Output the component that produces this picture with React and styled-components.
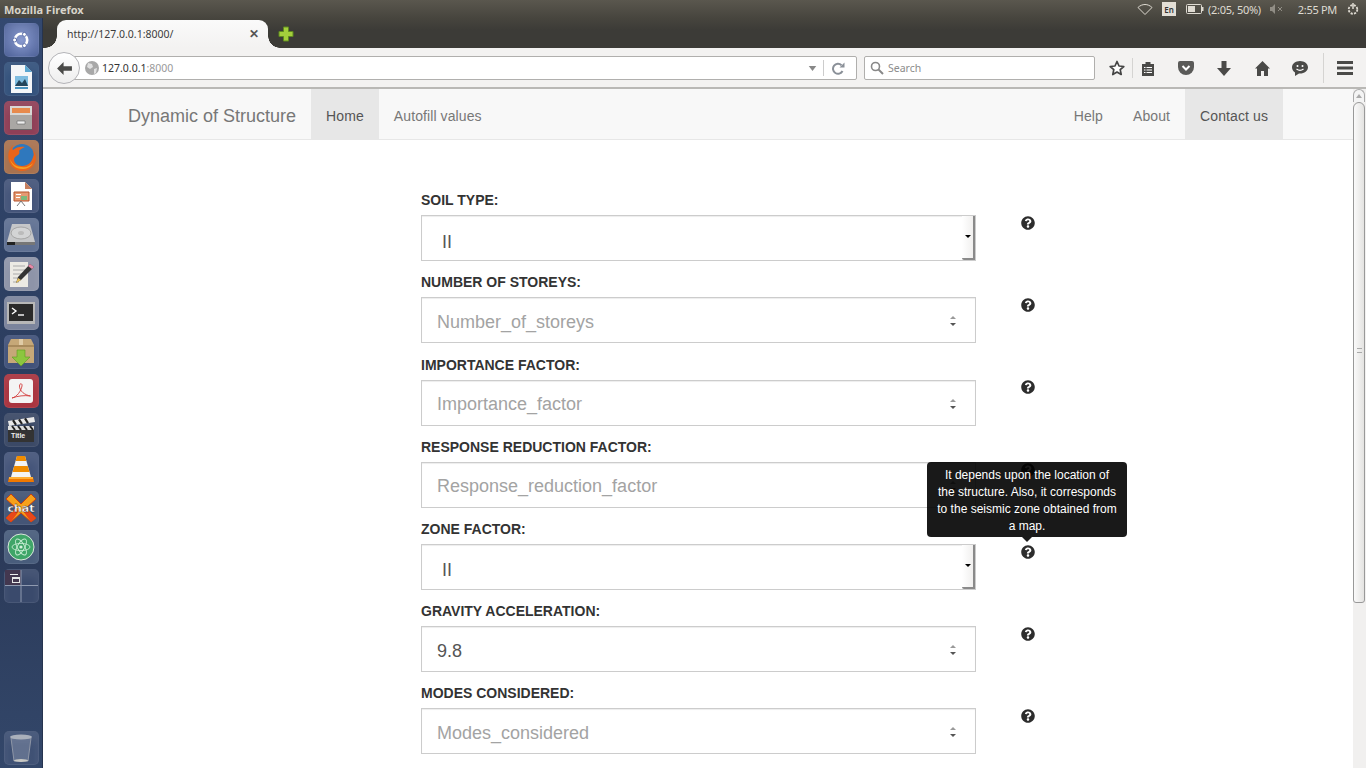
import React from "react";
import styled, { createGlobalStyle } from "styled-components";
import { FaQuestionCircle } from "react-icons/fa";

const Global = createGlobalStyle`
  html, body { margin: 0; padding: 0; overflow: hidden; background: #fff; }
  * { box-sizing: border-box; }
`;

const Screen = styled.div`
  width: 1366px; height: 768px; overflow: hidden; display: flex; flex-direction: column;
  font-family: "Liberation Sans", Arial, sans-serif;
`;
const Panel = styled.div`
  height: 18px; flex: none; display: flex; align-items: center; padding: 0 6px 0 4px;
  background: linear-gradient(#5a574e, #47453e); color: #dfdbd2;
  font: 11px "Noto Sans", sans-serif;
`;
const PanelTitle = styled.div`font-weight: 700; flex: 1; letter-spacing: 0; color: #d8d4ca;`;
const Tray = styled.div`display: flex; align-items: center; white-space: nowrap;`;
const LangBox = styled.span`
  width: 14px; height: 14px; background: #e3dfd6; color: #333; font-size: 8px; font-weight: 600;
  display: flex; align-items: center; justify-content: center; margin: 0 10px 0 9px;
`;
const BatteryText = styled.span`margin: 0 9px 0 4px; font-size: 11px; letter-spacing: -.3px;`;
const Clock = styled.span`margin: 0 9px 0 15px; font-size: 11px; letter-spacing: -.3px;`;

const Desktop = styled.div`flex: 1; display: flex; min-height: 0;`;
const Launcher = styled.div`
  width: 43px; flex: none; display: flex; flex-direction: column; align-items: center;
  padding: 5px 0 3px 0; gap: 5px;
  background: linear-gradient(#33486f, #2c3e60 45%, #2b3a59 70%, #33476a);
  border-right: 1px solid #26344f;
`;
const Tile = styled.div`
  width: 35px; height: 34px; border-radius: 5px; flex: none; display: flex; align-items: center; justify-content: center;
  background: ${p => p.$bg}; border: 1px solid rgba(255,255,255,.08); box-shadow: inset 0 8px 8px rgba(255,255,255,.07);
  ${p => p.$push && "margin-top: auto;"}
`;
const Browser = styled.div`flex: 1; min-width: 0; display: flex; flex-direction: column;`;
const TabStrip = styled.div`
  height: 30px; flex: none; display: flex; align-items: flex-end; padding-left: 14px;
  background: linear-gradient(#47453e, #3c3b37 40%);
`;
const Tab = styled.div`
  position: relative; width: 211px; height: 28px; border-radius: 9px 9px 0 0;
  background: linear-gradient(#fafafa, #f3f2f1);
  display: flex; align-items: center; justify-content: space-between; padding: 1px 9px 2px 10px;
  color: #3c3c3c; font: 10.5px "Noto Sans", sans-serif;
  &::before, &::after { content: ""; position: absolute; bottom: 0; width: 12px; height: 12px; }
  &::before { left: -12px; background: radial-gradient(circle at 0 0, transparent 11.5px, #f3f2f1 12px); }
  &::after { right: -12px; background: radial-gradient(circle at 100% 0, transparent 11.5px, #f3f2f1 12px); }
`;
const TabClose = styled.span`font-size: 12px; font-weight: 700; color: #555; line-height: 1;`;
const NewTab = styled.div`margin: 0 0 6px 10px; height: 16px; display: flex;`;

const Toolbar = styled.div`
  height: 41px; flex: none; display: flex; align-items: center; position: relative;
  padding: 1px 0 0 21px; background: #f3f2f1; border-bottom: 2px solid #b9b8b5;
`;
const BackButton = styled.div`
  position: absolute; left: 5px; top: 4px; width: 32px; height: 32px; border-radius: 50%; z-index: 1;
  background: linear-gradient(#fff, #eee); border: 1px solid #b4b4b8;
  display: flex; align-items: center; justify-content: center;
`;
const UrlBar = styled.div`
  width: 793px; height: 24px; margin-left: 0; background: #fff; border: 1px solid #b0afad; border-radius: 0 2px 2px 0;
  display: flex; align-items: center; padding-left: 20px; font: 10.5px "Noto Sans", sans-serif; color: #333;
`;
const Globe = styled.span`display: flex; margin-right: 3px;`;
const UrlPort = styled.span`color: #999;`;
const UrlEnd = styled.div`margin-left: auto; display: flex; align-items: center; height: 100%;`;
const Divider = styled.span`width: 1px; height: 16px; background: #ccc; margin: 0 8px 0 6px;`;
const ReloadBox = styled.span`display: flex; margin-right: 11px;`;
const SearchBar = styled.div`
  width: 231px; height: 24px; margin-left: 7px; background: #fff; border: 1px solid #b0afad; border-radius: 2px;
  display: flex; align-items: center; padding-left: 5px; gap: 4px; color: #8c8c8c; font: 10.5px "Noto Sans", sans-serif;
`;
const ToolIcons = styled.div`display: flex; align-items: center; margin-left: 7px; height: 100%;`;
const ToolIcon = styled.span`width: ${p => p.$w}px; display: flex; justify-content: center; flex: none;`;
const ToolSep = styled.span`
  width: 1px; height: ${p => p.$h}px; background: #d5d4d2; flex: none; margin-left: ${p => p.$ml || 0}px;
`;

const Viewport = styled.div`flex: 1; display: flex; min-height: 0; background: #fff;`;
const Page = styled.div`flex: 1; min-width: 0; overflow: hidden;`;
const Navbar = styled.nav`
  height: 51px; display: flex; padding: 0 70px 0 70px; background: #f8f8f8; border-bottom: 1px solid #e7e7e7;
`;
const Brand = styled.a`padding: 0 15px; font-size: 18px; line-height: 54px; color: #777; white-space: nowrap;`;
const NavLink = styled.a`
  padding: 0 15px; font-size: 14px; line-height: 55px; height: 50px; white-space: nowrap; letter-spacing: .1px;
  color: ${p => (p.$active ? "#555" : "#777")}; background: ${p => (p.$active ? "#e7e7e7" : "transparent")};
  ${p => p.$pushRight && "margin-left: auto;"}
`;
const Form = styled.div`padding: 50.2px 0 0 378px;`;
const Field = styled.div`
  height: 82.2px; display: grid; grid-template-columns: 555px 14px; column-gap: 45px; align-content: start;
`;
const FieldBody = styled.div`display: flex; flex-direction: column;`;
const Label = styled.label`
  font-size: 14px; font-weight: 700; line-height: 21px; color: #333; margin-bottom: 4px; white-space: nowrap;
`;
const Control = styled.div`
  position: relative; height: 46px; border: 1px solid #ccc; background: #fff; display: flex; align-items: center;
  padding: ${p => (p.$select ? "8px 0 0 20px" : "4px 0 0 15px")}; font-size: 18px;
  color: ${p => (p.$placeholder ? "#a3a3a3" : "#555")};
  box-shadow: inset 0 1px 1px rgba(0,0,0,.075);
`;
const DropButton = styled.span`
  position: absolute; top: 0; right: 0; bottom: 0; width: 13px; display: flex; align-items: center; justify-content: center;
  background: linear-gradient(90deg, #fff, #f1f0ef); border-right: 2px solid #8a8a8a; border-bottom: 2px solid #8a8a8a;
  border-radius: 0 0 0 2px; padding-bottom: 1px;
`;
const DropArrow = styled.i`
  width: 0; height: 0; border: 3px solid transparent; border-top-color: #000; border-bottom-width: 0; display: block;
`;
const Spinner = styled.span`
  position: absolute; right: 19px; top: 18px; display: flex; flex-direction: column; gap: 4px;
`;
const SpinUp = styled.i`display: block; width: 0; height: 0; border: 3.5px solid transparent; border-top-width: 0; border-bottom: 3.5px solid #999;`;
const SpinDown = styled.i`display: block; width: 0; height: 0; border: 3.5px solid transparent; border-bottom-width: 0; border-top: 3.5px solid #555;`;
const HelpWrap = styled.div`
  position: relative; height: 14px; margin-top: 25.8px; color: #2d2d2d; font-size: 14px; line-height: 14px;
  svg { display: block; }
`;
const Tooltip = styled.div`
  position: absolute; left: 50%; bottom: 22px; transform: translateX(-101px); z-index: 3; width: 200px;
  padding: 5px 8px 2px; border-radius: 4px; background: rgba(0,0,0,.9); color: #fff;
  font-size: 12px; line-height: 17px; text-align: center;
  &::after {
    content: ""; position: absolute; left: 50%; bottom: -5px; margin-left: -5px;
    border: 5px solid transparent; border-bottom-width: 0; border-top-color: rgba(0,0,0,.9);
  }
`;
const Scrollbar = styled.div`
  width: 13px; flex: none; background: #f1f0ef; display: flex; flex-direction: column; padding-right: 1px;
`;
const ScrollUp = styled.div`
  height: 13px; border: 1px solid #aaa; border-bottom: 0; border-radius: 6px 6px 0 0; background: #f4f4f4;
  display: flex; justify-content: center; padding-top: 4px;
`;
const ScrollArrow = styled.i`display: block; width: 0; height: 0; border: 3.5px solid transparent; border-top-width: 0; border-bottom: 4px solid #aaa;`;
const ScrollThumb = styled.div`
  height: 501px; border: 1px solid #999; border-radius: 6px 6px 3px 3px; padding-bottom: 4px;
  background: linear-gradient(90deg, #fafafa, #e4e3e1); display: flex; align-items: center; justify-content: center;
`;
const Grip = styled.i`display: block; width: 5px; height: 5px; border-top: 1px solid #aaa; border-bottom: 1px solid #aaa;`;

const Ubuntu = () => (
  <svg width="24" height="24" viewBox="0 0 24 24"><circle cx="12" cy="12" r="6.2" fill="none" stroke="#fff" strokeWidth="2.6" /><circle cx="5.6" cy="12" r="2" fill="#fff" stroke="#5b6ea8" /><circle cx="15.4" cy="6.4" r="2" fill="#fff" stroke="#5b6ea8" /><circle cx="15.4" cy="17.6" r="2" fill="#fff" stroke="#5b6ea8" /></svg>
);
const DrawDoc = () => (
  <svg width="26" height="30" viewBox="0 0 26 30"><path d="M3 1h14l7 7v21H3z" fill="#f4f6f8" /><path d="M17 1l7 7h-7z" fill="#5aa6d0" /><path d="M7 12h13v10H7z" fill="#7fbde0" /><path d="M7 22l4-6 3 3 3-4 3 7z" fill="#24465c" /><path d="M7 23h13v2H7z" fill="#4a94c0" /></svg>
);
const Cabinet = () => (
  <svg width="28" height="28" viewBox="0 0 28 28"><path d="M3 2h22v24H3z" fill="#a9a7a4" /><path d="M3 2h22v9H3z" fill="#d9d7d4" /><path d="M5 4h18v5H5z" fill="#e78a4c" /><path d="M10 17h8v3h-8z" fill="#eee" stroke="#666" strokeWidth=".6" /><path d="M3 25h22v1H3z" fill="#666" /></svg>
);
const Firefox = () => (
  <svg width="31" height="31" viewBox="0 0 31 31"><circle cx="16" cy="14" r="12" fill="#2f78bd" /><path d="M3 9c-3 11 4 20 13 20 8 0 14-6 14-13 0-3-1-6-3-8 1 3 1 5 0 7-1 5-5 9-11 9-5 0-8-3-8-7 1-3 3-3 5-5 1-2 0-3 0-3 1-1 3-3 6-4-4-1-9 0-12 3C6 7 6 5 7 3 5 5 4 7 3 9z" fill="#e9641b" /><path d="M4 17c1 6 6 10 12 10 5 0 9-2 11-6-3 3-7 5-11 4-6 0-10-3-12-8z" fill="#f7a01f" /></svg>
);
const Impress = () => (
  <svg width="26" height="30" viewBox="0 0 26 30"><path d="M3 1h14l7 7v21H3z" fill="#fff" /><path d="M17 1l7 7h-7z" fill="#c87f5d" /><path d="M6 11h15v9H6z" fill="#e59a73" stroke="#b5532b" /><path d="M13 15h6v4h-6z" fill="#7cb87c" /><path d="M8 13h5v1H8zM8 16h4v1H8z" fill="#fff" /><path d="M13 20l-4 5M13 20l4 5" stroke="#777" /></svg>
);
const Disk = () => (
  <svg width="30" height="26" viewBox="0 0 30 26"><path d="M6 2h18l5 18H1z" fill="#c6c7c9" /><ellipse cx="15" cy="11" rx="10" ry="6" fill="#d3d4d5" stroke="#a5a5a5" /><ellipse cx="15" cy="11" rx="3" ry="2" fill="#bbb" /><path d="M1 20h28v3H1z" fill="#777" /><path d="M1 20h8v3H1z" fill="#222" /></svg>
);
const Gedit = () => (
  <svg width="30" height="30" viewBox="0 0 30 30"><path d="M4 3h18v25H4z" fill="#eceae4" /><path d="M7 7h12M7 11h12M7 15h10M7 19h8M7 23h6" stroke="#aaa" /><path d="M10 24l2-6L24 5l4 3-13 13z" fill="#333" /><path d="M22 7l4 3 2-2-4-3z" fill="#e889a8" /><path d="M10 24l2-5 3 2z" fill="#e8c15c" /></svg>
);
const Terminal = () => (
  <svg width="30" height="24" viewBox="0 0 30 24"><path d="M1 1h28v22H1z" fill="#b7b7b7" /><path d="M3 3h24v17H3z" fill="#2a2a2a" /><path d="M6 7l4 3-4 3" fill="none" stroke="#fff" strokeWidth="1.4" /><path d="M12 14h6" stroke="#fff" strokeWidth="1.4" /></svg>
);
const Package = () => (
  <svg width="30" height="30" viewBox="0 0 30 30"><path d="M2 8l3-6h20l3 6v18H2z" fill="#c6a878" /><path d="M2 8h26v2H2z" fill="#a88a5c" /><path d="M13 2h4v6h-4z" fill="#e0cba6" /><path d="M15 29l-9-9h5v-7h8v7h5z" fill="#8cc63f" stroke="#5d9a20" strokeWidth=".6" /></svg>
);
const Evince = () => (
  <svg width="28" height="28" viewBox="0 0 28 28"><rect x="2" y="2" width="24" height="24" rx="3" fill="#f4f4f4" /><path d="M5 21c5-1 9-7 10-12 .5-3-2.500-3-2.500 0 0 5 5 9 11 10-6-1-13 0-18.500 2z" fill="none" stroke="#d23a3a" strokeWidth=".9" /></svg>
);
const Clapper = () => (
  <svg width="30" height="28" viewBox="0 0 30 28"><path d="M2 10h26v16H2z" fill="#333" /><path d="M2 5l26-4 1 5L3 10z" fill="#e8e8e8" /><path d="M7 4.2l3 4.7M13 3.3l3 4.7M19 2.4l3 4.7" stroke="#222" strokeWidth="2.2" /><path d="M2 10h26v4H2z" fill="#ddd" /><path d="M6 10l3 4M12 10l3 4M18 10l3 4M24 10l3 4" stroke="#222" strokeWidth="2" /><text x="5" y="22" fontSize="7" fontWeight="700" fill="#eee" fontFamily="Liberation Sans">Title</text></svg>
);
const Vlc = () => (
  <svg width="30" height="30" viewBox="0 0 30 30"><path d="M11 2h8l6 21H5z" fill="#f4f4f4" /><path d="M11 2h8l1.4 5H9.6zM8.3 12h13.4l1.8 6H6.5z" fill="#f08c00" /><path d="M3 23h24l1 5H2z" fill="#f07800" /><path d="M3 23h24v2H3z" fill="#ffae34" /></svg>
);
const XChat = () => (
  <svg width="32" height="30" viewBox="0 0 32 30"><path d="M6 1l10 10L26 1l5 5-10 9 10 10-5 4-10-9-10 9-5-4 10-10L1 6z" fill="#f7a11a" stroke="#c9400d" /><path d="M1 25l10-10 3 3-8 11zM31 25L21 15l-3 3 8 11z" fill="#e8481a" /><text x="16" y="18.500" fontSize="11" fontWeight="700" fill="#fff" stroke="#222" strokeWidth=".3" textAnchor="middle" fontFamily="DejaVu Sans">chat</text></svg>
);
const Atom = () => (
  <svg width="28" height="28" viewBox="0 0 28 28"><circle cx="14" cy="14" r="13" fill="#3fa568" stroke="#d9e6dc" /><circle cx="14" cy="14" r="1.6" fill="#d2f0dc" /><g fill="none" stroke="#c6ecd2" strokeWidth=".9"><ellipse cx="14" cy="14" rx="9" ry="3.6" /><ellipse cx="14" cy="14" rx="9" ry="3.6" transform="rotate(60 14 14)" /><ellipse cx="14" cy="14" rx="9" ry="3.6" transform="rotate(120 14 14)" /></g></svg>
);
const Workspaces = () => (
  <svg width="33" height="32" viewBox="0 0 33 32"><path d="M0 0h16v15H0z" fill="#43374f" /><path d="M16 0v32M0 15.500h33" stroke="#8f9ab0" /><path d="M5 4h8v1H5z" fill="#eee" /><path d="M7 7h8v6H7z" fill="#e6e6e6" /><path d="M8 9h6v3H8z" fill="#43374f" /></svg>
);
const Trash = () => (
  <svg width="26" height="30" viewBox="0 0 26 30"><path d="M3 5l3 23h14l3-23z" fill="rgba(220,225,235,.22)" stroke="#8e96a6" /><ellipse cx="13" cy="4" rx="11" ry="2.500" fill="#aab0bb" /><ellipse cx="13" cy="27.500" rx="7" ry="1.500" fill="#c8c8c4" /></svg>
);

const tiles = [
  [Ubuntu, "radial-gradient(circle,#8a9bd0,#4b5f96)"], [DrawDoc, "#34527c"], [Cabinet, "#8f3f57"], [Firefox, "#a8724f"],
  [Impress, "#45557a"], [Disk, "#5f7092"], [Gedit, "#8e94a8"], [Terminal, "#7b849c"], [Package, "#41527a"],
  [Evince, "#a9343f"], [Clapper, "#3b4966"], [Vlc, "#45557a"], [XChat, "#445576"], [Atom, "#495d7c"], [Workspaces, "#3a4a6c"],
];

const fields = [
  { label: "SOIL TYPE:", value: "II", select: true },
  { label: "NUMBER OF STOREYS:", value: "Number_of_storeys", placeholder: true },
  { label: "IMPORTANCE FACTOR:", value: "Importance_factor", placeholder: true },
  { label: "RESPONSE REDUCTION FACTOR:", value: "Response_reduction_factor", placeholder: true },
  { label: "ZONE FACTOR:", value: "II", select: true, tip: "It depends upon the location of the structure. Also, it corresponds to the seismic zone obtained from a map." },
  { label: "GRAVITY ACCELERATION:", value: "9.8" },
  { label: "MODES CONSIDERED:", value: "Modes_considered", placeholder: true },
];

const icon = { fill: "#4a4a48" };

export default function App() {
  return (
    <Screen>
      <Global />
      <Panel>
        <PanelTitle>Mozilla Firefox</PanelTitle>
        <Tray>
          <svg width="16" height="11" viewBox="0 0 16 11"><path d="M1 3.500C5-.5 11-.5 15 3.500L8 10.500z" fill="none" stroke="#dfdbd2" /></svg>
          <LangBox>En</LangBox>
          <svg width="18" height="10" viewBox="0 0 18 10"><rect x=".5" y=".5" width="15" height="9" rx="1" fill="none" stroke="#dfdbd2" /><rect x="2" y="2" width="7" height="6" fill="#dfdbd2" /><path d="M16 3h1.500v4H16z" fill="#dfdbd2" /></svg>
          <BatteryText>(2:05, 50%)</BatteryText>
          <svg width="13" height="10" viewBox="0 0 13 10" opacity=".45"><path d="M0 3h2l3-3v10L2 7H0z" fill="#dfdbd2" /><path d="M8 3l4 4M12 3L8 7" stroke="#dfdbd2" /></svg>
          <Clock>2:55 PM</Clock>
          <svg width="14" height="14" viewBox="0 0 14 14"><circle cx="7" cy="7.500" r="4.300" fill="none" stroke="#dfdbd2" strokeWidth="1.800" strokeDasharray="2.200 1.200" /><path d="M7 1v6" stroke="#dfdbd2" strokeWidth="1.500" /></svg>
        </Tray>
      </Panel>
      <Desktop>
        <Launcher>
          {tiles.map(([Icon, bg], i) => (
            <Tile key={i} $bg={bg}><Icon /></Tile>
          ))}
          <Tile $bg="rgba(80,95,130,.45)" $push><Trash /></Tile>
        </Launcher>
        <Browser>
          <TabStrip>
            <Tab>
              <span>http://127.0.0.1:8000/</span>
              <TabClose>✕</TabClose>
            </Tab>
            <NewTab>
              <svg width="16" height="16" viewBox="0 0 16 16"><path d="M5.500 1h5v4.500H15v5h-4.500V15h-5v-4.500H1v-5h4.500z" fill="#a4cf3c" stroke="#5f8a1f" /></svg>
            </NewTab>
          </TabStrip>
          <Toolbar>
            <BackButton>
              <svg width="15" height="13" viewBox="0 0 16 14"><path d="M7 0L0 7l7 7V9.500h9v-5H7z" {...icon} /></svg>
            </BackButton>
            <UrlBar>
              <Globe>
                <svg width="14" height="14" viewBox="0 0 14 14"><circle cx="7" cy="7" r="7" fill="#a8a8a8" /><path d="M3 2l4 1 1 3-3 2-3-2zM9 8l3-1-1 5-2 1z" fill="#e0e0e0" /></svg>
              </Globe>
              <span>127.0.0.1<UrlPort>:8000</UrlPort></span>
              <UrlEnd>
                <svg width="9" height="5" viewBox="0 0 9 6"><path d="M0 0h9L4.500 6z" fill="#888" /></svg>
                <Divider />
                <ReloadBox>
                  <svg width="13" height="13" viewBox="0 0 13 13"><path d="M10.500 9A5 5 0 1 1 9.500 3.200" fill="none" stroke="#8a9098" strokeWidth="2" /><path d="M7.500 5.500h5V.500z" fill="#8a9098" /></svg>
                </ReloadBox>
              </UrlEnd>
            </UrlBar>
            <SearchBar>
              <svg width="14" height="14" viewBox="0 0 14 14"><circle cx="5.500" cy="5.500" r="4" fill="none" stroke="#888" strokeWidth="1.600" /><path d="M8.500 8.500l4.500 4.500" stroke="#888" strokeWidth="2" /></svg>
              <span>Search</span>
            </SearchBar>
            <ToolIcons>
              <ToolIcon $w={30}>
                <svg width="16" height="16" viewBox="0 0 16 16"><path d="M8 1.500l2 4.500 4.800.5-3.600 3.200 1 4.800L8 12l-4.200 2.500 1-4.800L1.200 6.500 6 6z" fill="#fff" stroke="#444" strokeWidth="1.700" strokeLinejoin="round" /></svg>
              </ToolIcon>
              <ToolSep $h={20} />
              <ToolIcon $w={30}>
                <svg width="14" height="15" viewBox="0 0 14 15"><path d="M1 3h3.500V1h5v2H13v12H1z" {...icon} /><path d="M3 6h1.500v1H3zM5.500 6H11v1H5.500zM3 8.500h1.500v1H3zM5.500 8.500H11v1H5.500zM3 11h1.500v1H3zM5.500 11H11v1H5.500z" fill="#fff" /></svg>
              </ToolIcon>
              <ToolIcon $w={46}>
                <svg width="16" height="14" viewBox="0 0 16 14"><path d="M0 2a2 2 0 0 1 2-2h12a2 2 0 0 1 2 2v4a8 8 0 0 1-16 0z" fill="#5a5a58" /><path d="M4.500 5L8 8.500 11.500 5" fill="none" stroke="#fff" strokeWidth="2" /></svg>
              </ToolIcon>
              <ToolIcon $w={30}>
                <svg width="14" height="15" viewBox="0 0 14 15"><path d="M4.500 0h5v7H14l-7 8-7-8h4.500z" {...icon} /></svg>
              </ToolIcon>
              <ToolIcon $w={46}>
                <svg width="15" height="15" viewBox="0 0 15 15"><path d="M7.500 0L15 7.500h-2V15H9v-5H6v5H2V7.500H0z" {...icon} /></svg>
              </ToolIcon>
              <ToolIcon $w={30}>
                <svg width="16" height="15" viewBox="0 0 16 15"><path d="M8 0c4.400 0 8 2.800 8 6.300s-3.600 6.300-8 6.300l-1-.1L3 15v-3.400C1.200 10.500 0 8.500 0 6.300 0 2.800 3.600 0 8 0z" {...icon} /><circle cx="5.500" cy="5" r="1" fill="#fff" /><circle cx="10.500" cy="5" r="1" fill="#fff" /><path d="M4.500 8c2 1.500 5 1.500 7 0" fill="none" stroke="#fff" strokeWidth="1.200" /></svg>
              </ToolIcon>
              <ToolSep $h={30} $ml={8} />
              <ToolIcon $w={42}>
                <svg width="16" height="14" viewBox="0 0 16 14"><path d="M0 0h16v3H0zM0 5.500h16v3H0zM0 11h16v3H0z" {...icon} /></svg>
              </ToolIcon>
            </ToolIcons>
          </Toolbar>
          <Viewport>
            <Page>
              <Navbar>
                <Brand>Dynamic of Structure</Brand>
                <NavLink $active>Home</NavLink>
                <NavLink>Autofill values</NavLink>
                <NavLink $pushRight>Help</NavLink>
                <NavLink>About</NavLink>
                <NavLink $active>Contact us</NavLink>
              </Navbar>
              <Form>
                {fields.map(f => (
                  <Field key={f.label}>
                    <FieldBody>
                      <Label>{f.label}</Label>
                      <Control $select={f.select} $placeholder={f.placeholder}>
                        {f.value}
                        {f.select ? (
                          <DropButton><DropArrow /></DropButton>
                        ) : (
                          <Spinner><SpinUp /><SpinDown /></Spinner>
                        )}
                      </Control>
                    </FieldBody>
                    <HelpWrap>
                      <FaQuestionCircle />
                      {f.tip && <Tooltip>{f.tip}</Tooltip>}
                    </HelpWrap>
                  </Field>
                ))}
              </Form>
            </Page>
            <Scrollbar>
              <ScrollUp><ScrollArrow /></ScrollUp>
              <ScrollThumb><Grip /></ScrollThumb>
            </Scrollbar>
          </Viewport>
        </Browser>
      </Desktop>
    </Screen>
  );
}
